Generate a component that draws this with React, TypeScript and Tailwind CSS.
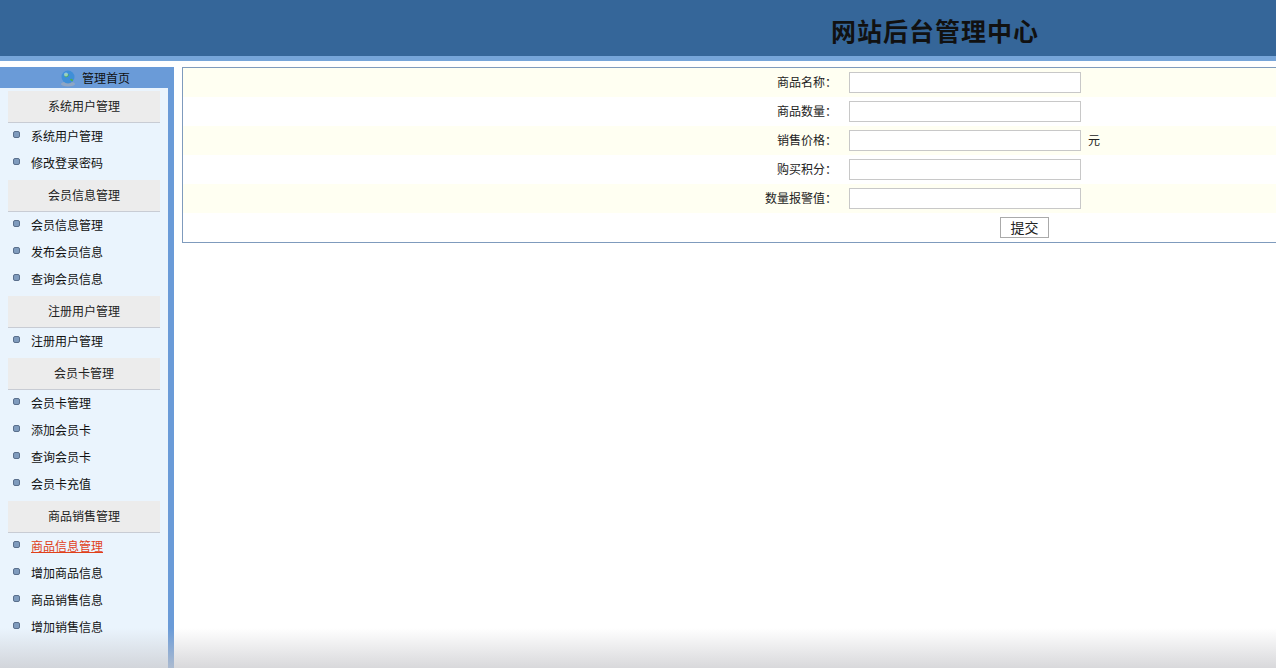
import React from "react";

const sections = [
  { title: "系统用户管理", items: ["系统用户管理", "修改登录密码"] },
  { title: "会员信息管理", items: ["会员信息管理", "发布会员信息", "查询会员信息"] },
  { title: "注册用户管理", items: ["注册用户管理"] },
  { title: "会员卡管理", items: ["会员卡管理", "添加会员卡", "查询会员卡", "会员卡充值"] },
  { title: "商品销售管理", items: ["商品信息管理", "增加商品信息", "商品销售信息", "增加销售信息"] },
];

const rows = [
  { label: "商品名称：", unit: "" },
  { label: "商品数量：", unit: "" },
  { label: "销售价格：", unit: "元" },
  { label: "购买积分：", unit: "" },
  { label: "数量报警值：", unit: "" },
];

function Globe() {
  return (
    <svg width="20" height="18" viewBox="0 0 20 18">
      <ellipse cx="10" cy="15" rx="7" ry="2.5" fill="#8fa6c4" />
      <circle cx="10" cy="8" r="6.5" fill="#3f8fd8" />
      <path d="M6 5 Q9 3 11 6 Q9 9 7 8 Z" fill="#4caf50" />
      <path d="M12 10 Q15 9 15 12 Q13 13 12 10 Z" fill="#4caf50" />
      <circle cx="8" cy="5.5" r="2" fill="#cfe8ff" opacity="0.6" />
    </svg>
  );
}

export default function App() {
  return (
    <div
      className="relative w-[1276px] h-[668px] overflow-hidden bg-white text-[12px] text-[#222]"
      style={{ fontFamily: '"Liberation Sans", "Noto Sans CJK SC", sans-serif' }}
    >
      <div className="h-[56px] bg-[#356699] flex items-center pl-[831px]">
        <span
          className="text-[25px] font-bold text-[#111] tracking-[1px] mt-[5px]"
          style={{ fontFamily: '"Noto Sans CJK SC", serif' }}
        >
          网站后台管理中心
        </span>
      </div>
      <div className="h-[5px] bg-[#76a5d9]" />
      <div className="h-[6px]" />
      <div className="flex">
        <div className="w-[174px] bg-[#6a9bd8] pr-[6px] h-[620px]">
          <div className="h-[21px] flex items-center justify-center gap-[4px] text-[12px] text-[#111] pl-[20px]">
            <Globe />
            <span className="mt-[3px]">管理首页</span>
          </div>
          <div className="ml-[0px] bg-[#eaf4fd] h-full">
            {sections.map((s) => (
              <div key={s.title}>
                <div className="pt-[3px] px-[8px]">
                  <div className="h-[32px] bg-[#ececec] border-b border-[#c8ccd4] flex items-center justify-center text-[12px]">
                    {s.title}
                  </div>
                </div>
                {s.items.map((it) => (
                  <div key={it} className="h-[27px] flex items-center pl-[13px]">
                    <span className="w-[7px] h-[7px] bg-[#7f9bbd] border border-[#5a6f8c] rounded-[2px] mr-[11px] mt-[-4px]" />
                    <span
                      className={
                        it === "商品信息管理"
                          ? "text-[#e0401a] underline"
                          : "text-[#111]"
                      }
                    >
                      {it}
                    </span>
                  </div>
                ))}
              </div>
            ))}
          </div>
        </div>
        <div className="flex-1 pl-[8px]">
          <div className="border border-[#7f9bbd] border-r-0 h-[176px] bg-white">
            {rows.map((r, i) => (
              <div
                key={r.label}
                className={`h-[29px] flex items-center ${i % 2 === 0 ? "bg-[#fffff2]" : "bg-white"}`}
              >
                <div className="w-[666px] text-right pr-[12px]">{r.label}</div>
                <div className="w-[232px] h-[21px] border border-[#c8c8c8] bg-white" />
                <span className="ml-[7px]">{r.unit}</span>
              </div>
            ))}
            <div className="h-[29px] flex items-center pl-[817px]">
              <button className="w-[49px] h-[21px] border border-[#aaa] bg-white text-[14px] leading-none">
                提交
              </button>
            </div>
          </div>
        </div>
      </div>
      <div className="absolute left-0 bottom-0 w-full h-[40px] bg-gradient-to-b from-transparent to-[#c8c8cc]/70 pointer-events-none" />
    </div>
  );
}
